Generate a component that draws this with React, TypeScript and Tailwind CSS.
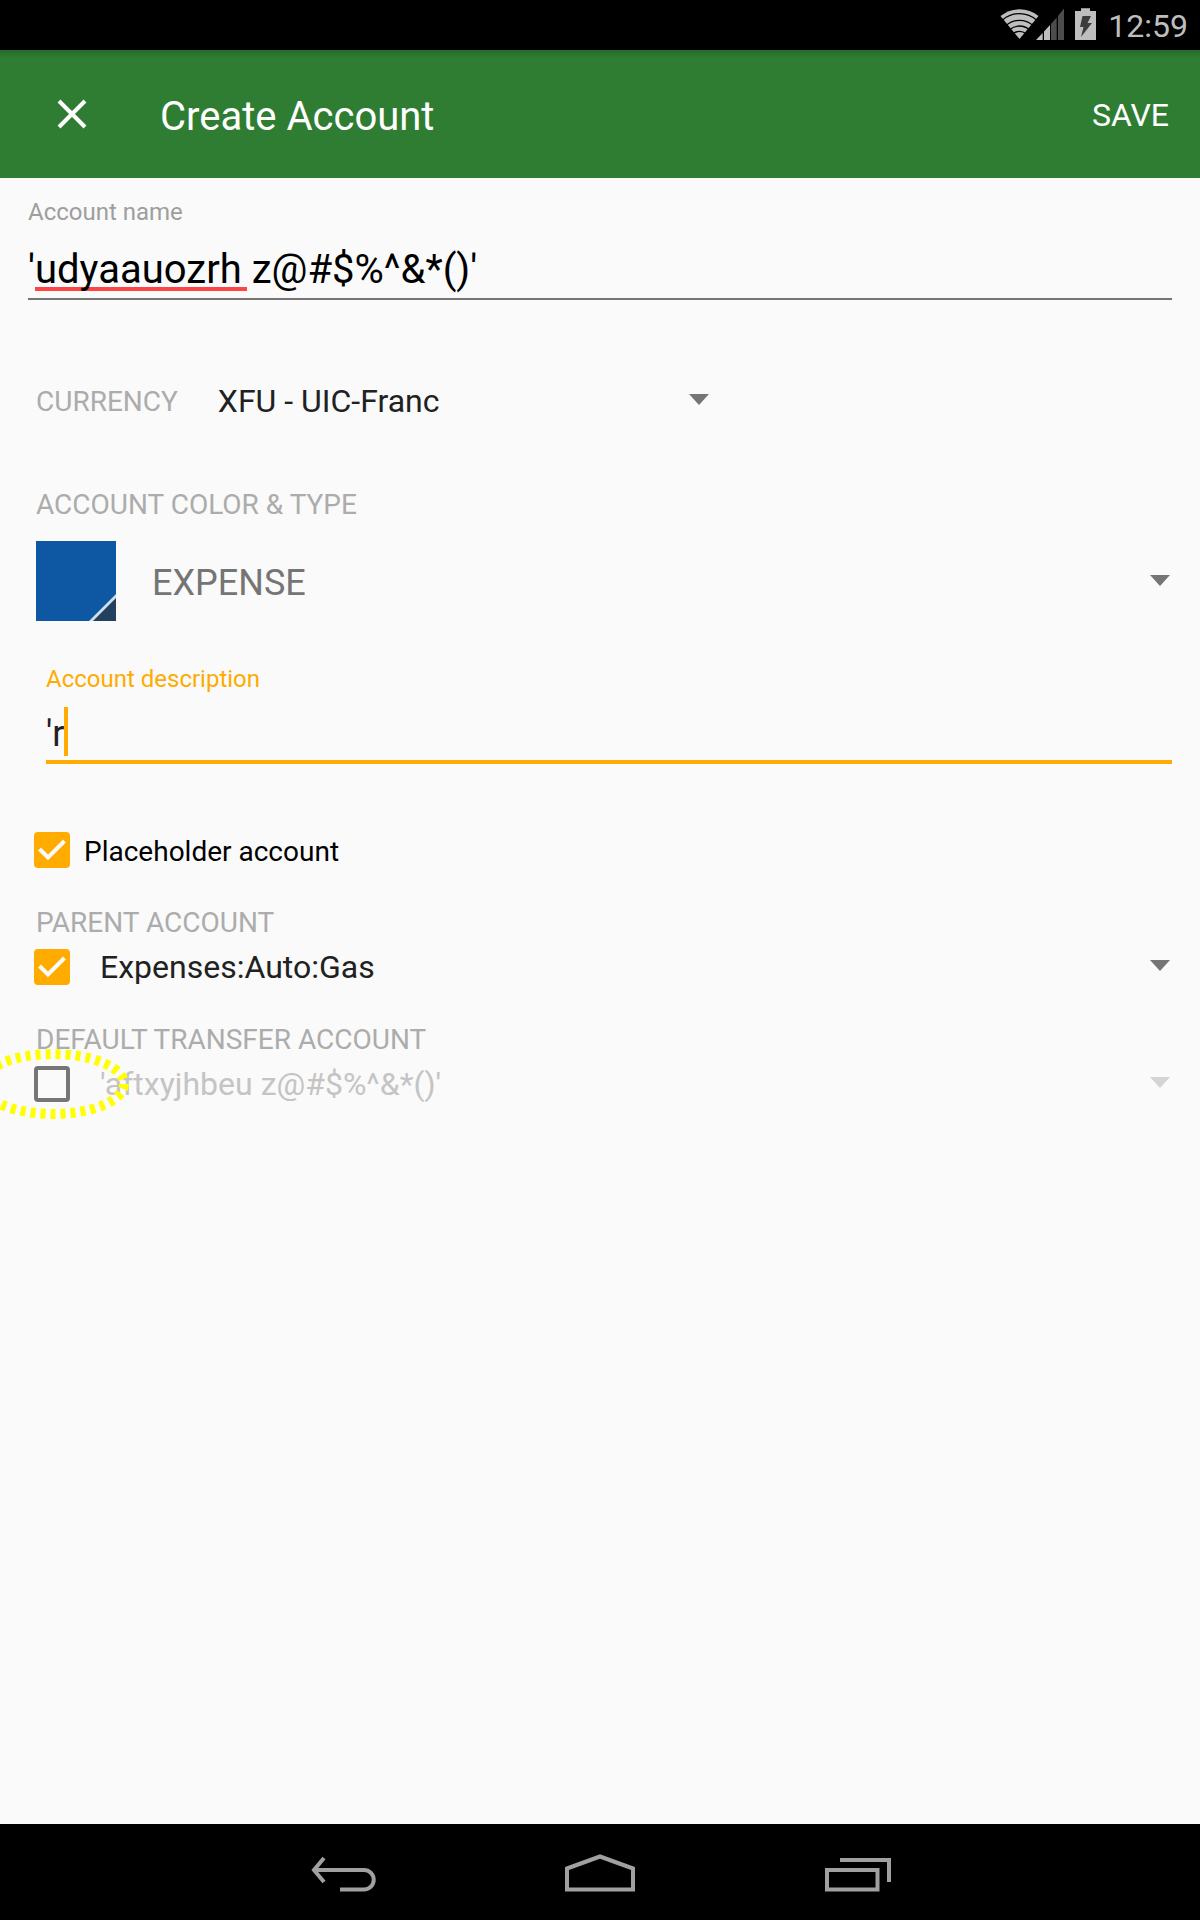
import React, { useState } from "react";

function StatusBar() {
  return (
    <div className="flex h-[50px] items-center justify-end bg-black pr-3 text-[#bebebe]">
      <svg className="h-[50px] w-32" viewBox="980 0 128 50" aria-hidden="true">
        <g fill="none" stroke="#bebebe">
          <path d="M1019.5 39 L1000.5 16 A30.5 30.5 0 0 1 1038.5 16 Z" fill="#bebebe" stroke="none" />
          <g stroke="#000" strokeWidth="1.3">
            <path d="M1002 20.4 A26 26 0 0 1 1037 20.4" />
            <path d="M1006 25.6 A20 20 0 0 1 1033 25.6" />
            <path d="M1009.5 29.8 A15 15 0 0 1 1029.5 29.8" />
            <path d="M1013 33.8 A10 10 0 0 1 1026 33.8" />
          </g>
        </g>
        <path d="M1036 40 L1042.7 33 V40 Z M1044 31.5 L1050 25 V40 H1044 Z" fill="#bebebe" />
        <path d="M1051 24 L1056.7 17.5 V40 H1051 Z M1058 16 L1064 8.5 V40 H1058 Z" fill="#4c4c4c" />
        <path d="M1081 8.3 H1090 V11 H1096 V40 H1075 V11 H1081 Z" fill="#bebebe" />
        <path d="M1082.500 16 H1091 L1087.500 23 H1092 L1081 37 L1083.500 27 H1080 Z" fill="#3c3c3c" />
      </svg>
      <time className="pt-0.5 text-[32px] leading-[40px]">12:59</time>
    </div>
  );
}

function Arrow({ dim = false, className = "" }: { dim?: boolean; className?: string }) {
  return (
    <svg className={`pointer-events-none absolute h-[11px] w-5 ${className}`} viewBox="0 0 20 11" aria-hidden="true">
      <path d="M0 0 H20 L10 11 Z" fill={dim ? "#d4d4d4" : "#757575"} />
    </svg>
  );
}

function CheckBox({
  id,
  checked,
  onChange,
  label,
}: {
  id: string;
  checked: boolean;
  onChange: (v: boolean) => void;
  label?: string;
}) {
  return (
    <span className="relative block size-9 shrink-0">
      <input
        id={id}
        type="checkbox"
        aria-label={label}
        checked={checked}
        onChange={(e) => onChange(e.target.checked)}
        className="block size-9 appearance-none rounded-[4px] border-4 border-[#757575] checked:border-[#ffab00] checked:bg-[#ffab00]"
      />
      {checked && (
        <svg className="pointer-events-none absolute inset-0 size-9" viewBox="0 0 36 36" aria-hidden="true">
          <path d="M5.500 17 L14 25.500 L30.500 9" fill="none" stroke="#fafafa" strokeWidth="4" />
        </svg>
      )}
    </span>
  );
}

function AccountRow({
  id,
  title,
  value,
  initial,
  children,
}: {
  id: string;
  title: string;
  value: string;
  initial: boolean;
  children?: React.ReactNode;
}) {
  const [on, setOn] = useState(initial);
  return (
    <section className="mt-[27px]">
      <label htmlFor={id} className="block pl-2 pt-0.5 text-[28px] leading-[38px] text-[#acacac]">
        {title}
      </label>
      <div className="relative flex h-[50px] items-center pl-1.5">
        <CheckBox id={`${id}-enabled`} label={`Use ${title.toLowerCase()}`} checked={on} onChange={setOn} />
        <div className="relative ml-[30px] flex-1">
          <select
            id={id}
            disabled={!on}
            className="block h-[50px] w-full appearance-none text-[32px] text-[#212121] opacity-100 disabled:text-[#c4c4c4]"
          >
            <option>{value}</option>
          </select>
          <Arrow dim={!on} className="right-[2px] top-[18px]" />
        </div>
        {children}
      </div>
    </section>
  );
}

function NavButton({ label, children }: { label: string; children: React.ReactNode }) {
  return (
    <button type="button" aria-label={label} className="flex w-[257px] items-center justify-center">
      <svg className="h-12 w-20" viewBox="0 0 80 48" fill="none" stroke="#a0a0a0" strokeWidth="4" aria-hidden="true">
        {children}
      </svg>
    </button>
  );
}

export default function App() {
  const [name, setName] = useState("'udyaauozrh z@#$%^&*()'");
  const [description, setDescription] = useState("'r");
  const [placeholder, setPlaceholder] = useState(true);

  return (
    <div className="flex min-h-screen flex-col bg-[#fafafa] font-['Roboto',sans-serif]">
      <StatusBar />
      <header className="flex h-32 items-center bg-[#2e7d32] bg-linear-to-b from-[#286a2b] to-[#2e7d32] to-[8px] pl-[44px] pr-[31px] text-white">
        <button type="button" aria-label="Close" className="size-14">
          <svg className="size-14" viewBox="0 0 56 56" aria-hidden="true">
            <path d="M15 15 L41 41 M41 15 L15 41" stroke="#fff" strokeWidth="4" />
          </svg>
        </button>
        <h1 className="ml-[60px] flex-1 pt-1.5 text-[40px] leading-[48px]">Create Account</h1>
        <button type="button" className="pt-0.5 text-[32px] leading-[40px]">
          SAVE
        </button>
      </header>

      <main className="flex-1 px-7 pt-[18px]">
        <label htmlFor="name" className="block text-[24px] leading-[32px] text-[#9e9e9e]">
          Account name
        </label>
        <div className="relative mt-3">
          <span className="absolute bottom-[9px] left-[7px] h-1 w-[212px] bg-[#ff4444]" />
          <input
            id="name"
            type="text"
            spellCheck={false}
            value={name}
            onChange={(e) => setName(e.target.value)}
            className="relative block h-[60px] w-full border-b-2 border-[#757575] pt-0.5 text-[40px] text-black outline-none"
          />
        </div>

        <div className="mt-19 flex items-center gap-10 pl-2">
          <label htmlFor="currency" className="pt-0.5 text-[28px] leading-[38px] text-[#acacac]">
            CURRENCY
          </label>
          <div className="relative w-[492px]">
            <select id="currency" className="block h-[50px] w-full appearance-none text-[32px] text-[#212121]">
              <option>XFU - UIC-Franc</option>
            </select>
            <Arrow className="right-[1px] top-[18px]" />
          </div>
        </div>

        <label htmlFor="type" className="mt-[58px] block pl-2 pt-0.5 text-[28px] leading-[38px] text-[#acacac]">
          ACCOUNT COLOR &amp; TYPE
        </label>
        <div className="mt-[17px] flex pl-2">
          <button type="button" aria-label="Account color" className="size-20 bg-[#0d57a3]">
            <svg className="size-20" viewBox="0 0 80 80" aria-hidden="true">
              <path d="M80 53 V80 H53 Z" fill="#cfdded" />
              <path d="M80 57 V80 H57 Z" fill="#24405f" />
            </svg>
          </button>
          <div className="relative ml-9 flex-1">
            <select id="type" className="block h-20 w-full appearance-none pt-1 text-[36px] text-[#757575]">
              <option>EXPENSE</option>
            </select>
            <Arrow className="right-[2px] top-[34px]" />
          </div>
        </div>

        <div className="mt-[42px] pl-[18px]">
          <label htmlFor="description" className="block text-[24px] leading-[32px] text-[#ffab00]">
            Account description
          </label>
          <div className="relative mt-3">
            <input
              id="description"
              type="text"
              spellCheck={false}
              value={description}
              onChange={(e) => setDescription(e.target.value)}
              className="block h-[57px] w-full border-b-4 border-[#ffab00] text-[36px] text-[#212121] caret-[#ffab00] outline-none"
            />
            <span className="absolute left-[18px] top-0 h-[49px] w-1 bg-[#ffab00]" />
          </div>
        </div>

        <div className="mb-7 mt-[62px] flex h-12 items-center gap-[14px] pl-1.5">
          <CheckBox id="placeholder" checked={placeholder} onChange={setPlaceholder} />
          <label htmlFor="placeholder" className="pt-1 text-[28px] leading-[40px] text-black">
            Placeholder account
          </label>
        </div>

        <AccountRow id="parent" title="PARENT ACCOUNT" value="Expenses:Auto:Gas" initial={true} />
        <AccountRow id="transfer" title="DEFAULT TRANSFER ACCOUNT" value="'aftxyjhbeu z@#$%^&*()'" initial={false}>
          <svg
            className="pointer-events-none absolute -left-7 -top-[15px] h-20 w-[140px]"
            viewBox="0 0 140 80"
            aria-hidden="true"
          >
            <path
              d="M124 40 A71 30 0 0 1 -18 40 A71 30 0 0 1 124 40"
              fill="none"
              stroke="#ffff00"
              strokeWidth="10"
              strokeDasharray="5 5"
            />
          </svg>
        </AccountRow>
      </main>

      <nav className="flex h-24 items-center justify-center bg-black">
        <NavButton label="Back">
          <path d="M12 22 H61 A9.500 9.500 0 0 1 61 41.500 H37" />
          <path d="M21 10 L11 22 L21 34" />
        </NavButton>
        <NavButton label="Home">
          <path d="M7 20.500 L40 8.500 L73 20.500 V41.500 H7 Z" />
        </NavButton>
        <NavButton label="Recent apps">
          <path d="M10 22 H60.500 V41.500 H10 Z M23 12 H72 V34" />
        </NavButton>
      </nav>
    </div>
  );
}
